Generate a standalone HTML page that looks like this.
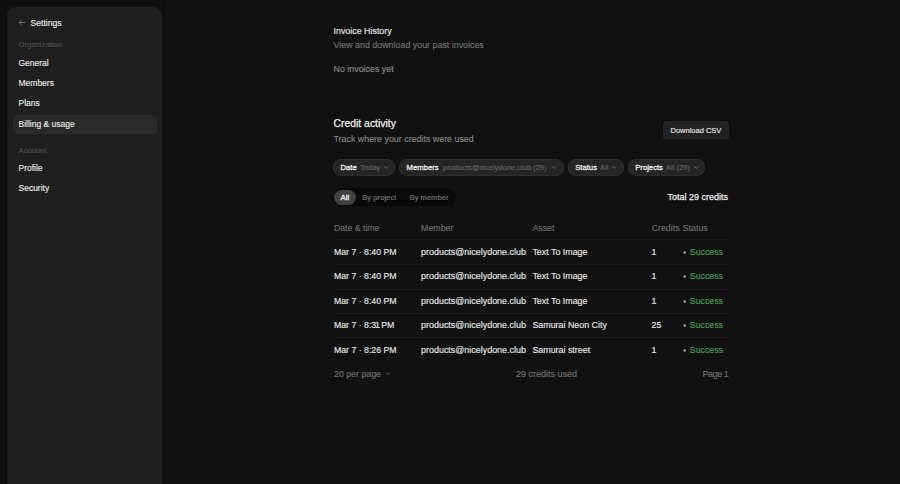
<!DOCTYPE html>
<html><head><meta charset="utf-8"><style>
html,body{margin:0;padding:0;}
body{width:900px;height:484px;overflow:hidden;background:#111111;position:relative;font-family:"Liberation Sans",sans-serif;}
.t{position:absolute;white-space:nowrap;line-height:1;-webkit-text-stroke:0.15px currentColor;}
.b{-webkit-text-stroke:0;}
.r{position:absolute;}
</style></head><body>
<div class="r" style="left:7px;top:7px;width:155px;height:520px;background:#1f1f1f;border-radius:9px;"></div>
<div class="r" style="left:162px;top:7px;width:4px;height:477px;background:#0d0d0d;border-radius:0px;"></div>
<div class="r" style="left:0px;top:0px;width:166px;height:7px;background:#0f0f0f;border-radius:0px;"></div>
<div class="r" style="left:0px;top:0px;width:7px;height:484px;background:#0e0e0e;border-radius:0px;"></div>
<div class="r" style="left:12.5px;top:115px;width:144px;height:19px;background:#2a2a2a;border-radius:4px;"></div>
<svg class="r" style="left:17.6px;top:19px" width="8" height="7" viewBox="0 0 8 7"><path d="M6.8 3.5H1.2M3.5 1.2L1.2 3.5L3.5 5.8" stroke="#8c8c8c" stroke-width="0.75" fill="none" stroke-linecap="round" stroke-linejoin="round"/></svg>
<div class="r" style="left:663px;top:121px;width:65.5px;height:18px;background:#222222;border-radius:4px;box-shadow: inset 0 0 0 0.8px #2b2b2b;"></div>
<div class="r" style="left:333.3px;top:159px;width:62px;height:17px;background:#252525;border-radius:9px;box-shadow: inset 0 0 0 0.8px #323232;"></div>
<svg class="r" style="left:384.09999999999997px;top:165.5px" width="5" height="3" viewBox="0 0 5 3"><path d="M0.5 0.6L2.3 2.3L4.1 0.6" stroke="#8a8a8a" stroke-width="0.7" fill="none" stroke-linecap="round" stroke-linejoin="round"/></svg>
<div class="r" style="left:399.4px;top:159px;width:164.6px;height:17px;background:#252525;border-radius:9px;box-shadow: inset 0 0 0 0.8px #323232;"></div>
<svg class="r" style="left:552.4px;top:165.5px" width="5" height="3" viewBox="0 0 5 3"><path d="M0.5 0.6L2.3 2.3L4.1 0.6" stroke="#8a8a8a" stroke-width="0.7" fill="none" stroke-linecap="round" stroke-linejoin="round"/></svg>
<div class="r" style="left:568px;top:159px;width:56px;height:17px;background:#252525;border-radius:9px;box-shadow: inset 0 0 0 0.8px #323232;"></div>
<svg class="r" style="left:612.4px;top:165.5px" width="5" height="3" viewBox="0 0 5 3"><path d="M0.5 0.6L2.3 2.3L4.1 0.6" stroke="#8a8a8a" stroke-width="0.7" fill="none" stroke-linecap="round" stroke-linejoin="round"/></svg>
<div class="r" style="left:628px;top:159px;width:77.4px;height:17px;background:#252525;border-radius:9px;box-shadow: inset 0 0 0 0.8px #323232;"></div>
<svg class="r" style="left:693.8px;top:165.5px" width="5" height="3" viewBox="0 0 5 3"><path d="M0.5 0.6L2.3 2.3L4.1 0.6" stroke="#8a8a8a" stroke-width="0.7" fill="none" stroke-linecap="round" stroke-linejoin="round"/></svg>
<div class="r" style="left:333.4px;top:188px;width:122.4px;height:18px;background:#090909;border-radius:9px;"></div>
<div class="r" style="left:334px;top:189.6px;width:22px;height:15px;background:#424242;border-radius:8px;"></div>
<div class="r" style="left:333.5px;top:239px;width:395px;height:1px;background:#1d1d1d;border-radius:0px;"></div>
<svg class="r" style="left:682px;top:250px" width="6" height="6" viewBox="0 0 6 6"><circle cx="2.7" cy="2.6" r="1.25" fill="#8fbf8f"/></svg>
<div class="r" style="left:333.5px;top:264px;width:395px;height:1px;background:#1d1d1d;border-radius:0px;"></div>
<svg class="r" style="left:682px;top:274px" width="6" height="6" viewBox="0 0 6 6"><circle cx="2.7" cy="2.6" r="1.25" fill="#8fbf8f"/></svg>
<div class="r" style="left:333.5px;top:289px;width:395px;height:1px;background:#1d1d1d;border-radius:0px;"></div>
<svg class="r" style="left:682px;top:299px" width="6" height="6" viewBox="0 0 6 6"><circle cx="2.7" cy="2.6" r="1.25" fill="#8fbf8f"/></svg>
<div class="r" style="left:333.5px;top:313px;width:395px;height:1px;background:#1d1d1d;border-radius:0px;"></div>
<svg class="r" style="left:682px;top:323px" width="6" height="6" viewBox="0 0 6 6"><circle cx="2.7" cy="2.6" r="1.25" fill="#8fbf8f"/></svg>
<div class="r" style="left:333.5px;top:337px;width:395px;height:1px;background:#1d1d1d;border-radius:0px;"></div>
<svg class="r" style="left:682px;top:348px" width="6" height="6" viewBox="0 0 6 6"><circle cx="2.7" cy="2.6" r="1.25" fill="#8fbf8f"/></svg>
<svg class="r" style="left:385.5px;top:372px" width="4.5" height="3" viewBox="0 0 4.5 3"><path d="M0.4 0.6L2.25 2.3L4.1 0.6" stroke="#6f6f6f" stroke-width="0.7" fill="none"/></svg>
<div class="t" style="left:30.5px;top:19px;font-size:8.6px;color:#e6e6e6;font-weight:400;">Settings</div>
<div class="t" style="left:18.5px;top:41px;font-size:7.7px;color:#4e4e4e;font-weight:400;">Organization</div>
<div class="t" style="left:18.5px;top:59px;font-size:8.5px;color:#e6e6e6;font-weight:400;">General</div>
<div class="t" style="left:18.5px;top:79px;font-size:8.5px;color:#e6e6e6;font-weight:400;">Members</div>
<div class="t" style="left:18.5px;top:99px;font-size:8.5px;color:#e6e6e6;font-weight:400;">Plans</div>
<div class="t" style="left:18.5px;top:120px;font-size:8.5px;color:#e6e6e6;font-weight:400;">Billing &amp; usage</div>
<div class="t" style="left:18.5px;top:147px;font-size:7.7px;color:#4e4e4e;font-weight:400;">Account</div>
<div class="t" style="left:18.5px;top:164px;font-size:8.5px;color:#e6e6e6;font-weight:400;">Profile</div>
<div class="t" style="left:18.5px;top:184px;font-size:8.5px;color:#e6e6e6;font-weight:400;">Security</div>
<div class="t" style="left:333.5px;top:27px;font-size:8.9px;color:#e6e6e6;font-weight:400;">Invoice History</div>
<div class="t" style="left:333.5px;top:41px;font-size:8.9px;color:#727272;font-weight:400;">View and download your past invoices</div>
<div class="t" style="left:333.5px;top:65px;font-size:8.9px;color:#8a8a8a;font-weight:400;">No invoices yet</div>
<div class="t" style="left:333.5px;top:119px;font-size:10.4px;color:#ededed;font-weight:400;-webkit-text-stroke:0.25px currentColor;">Credit activity</div>
<div class="t" style="left:333.5px;top:135px;font-size:8.9px;color:#858585;font-weight:400;">Track where your credits were used</div>
<div class="t" style="left:670.5px;top:127px;font-size:7.5px;color:#e6e6e6;font-weight:400;">Download CSV</div>
<div class="t" style="left:340.5px;top:164px;font-size:7.7px;color:#e8e8e8;font-weight:400;-webkit-text-stroke:0.3px currentColor;">Date</div>
<div class="t" style="left:360.3px;top:164px;font-size:7.5px;color:#636363;font-weight:400;">Today</div>
<div class="t" style="left:406.59999999999997px;top:164px;font-size:7.7px;color:#e8e8e8;font-weight:400;-webkit-text-stroke:0.3px currentColor;">Members</div>
<div class="t" style="left:443px;top:164px;font-size:7.5px;color:#636363;font-weight:400;">products@nicelydone.club (29)</div>
<div class="t" style="left:575.2px;top:164px;font-size:7.7px;color:#e8e8e8;font-weight:400;-webkit-text-stroke:0.3px currentColor;">Status</div>
<div class="t" style="left:600px;top:164px;font-size:7.5px;color:#636363;font-weight:400;">All</div>
<div class="t" style="left:635.2px;top:164px;font-size:7.7px;color:#e8e8e8;font-weight:400;-webkit-text-stroke:0.3px currentColor;">Projects</div>
<div class="t" style="left:666px;top:164px;font-size:7.5px;color:#636363;font-weight:400;">All (29)</div>
<div class="t" style="left:340.4px;top:194px;font-size:7.9px;color:#f0f0f0;font-weight:400;-webkit-text-stroke:0.3px currentColor;">All</div>
<div class="t" style="left:362.2px;top:194px;font-size:7.7px;color:#747474;font-weight:400;">By project</div>
<div class="t" style="left:409.6px;top:194px;font-size:7.6px;color:#747474;font-weight:400;">By member</div>
<div class="t" style="left:667.6px;top:193px;font-size:9px;color:#ececec;font-weight:400;-webkit-text-stroke:0.25px currentColor;">Total 29 credits</div>
<div class="t" style="left:334px;top:224px;font-size:8.7px;color:#6e6e6e;font-weight:400;">Date &amp; time</div>
<div class="t" style="left:421.1px;top:224px;font-size:8.8px;color:#6e6e6e;font-weight:400;">Member</div>
<div class="t" style="left:532.4px;top:224px;font-size:8.8px;color:#6e6e6e;font-weight:400;">Asset</div>
<div class="t" style="left:651.7px;top:224px;font-size:8.8px;color:#6e6e6e;font-weight:400;">Credits</div>
<div class="t" style="left:682.8px;top:224px;font-size:8.8px;color:#6e6e6e;font-weight:400;">Status</div>
<div class="t" style="left:334px;top:248px;font-size:8.73px;color:#e6e6e6;font-weight:400;">Mar 7 · 8:40 PM</div>
<div class="t" style="left:421.1px;top:248px;font-size:8.94px;color:#e6e6e6;font-weight:400;">products@nicelydone.club</div>
<div class="t" style="left:532.4px;top:248px;font-size:8.9px;color:#e6e6e6;font-weight:400;">Text To Image</div>
<div class="t" style="left:651.5px;top:248px;font-size:8.9px;color:#e6e6e6;font-weight:400;">1</div>
<div class="t" style="left:689.8px;top:248px;font-size:8.78px;color:#4b9f52;font-weight:400;">Success</div>
<div class="t" style="left:334px;top:272px;font-size:8.73px;color:#e6e6e6;font-weight:400;">Mar 7 · 8:40 PM</div>
<div class="t" style="left:421.1px;top:272px;font-size:8.94px;color:#e6e6e6;font-weight:400;">products@nicelydone.club</div>
<div class="t" style="left:532.4px;top:272px;font-size:8.9px;color:#e6e6e6;font-weight:400;">Text To Image</div>
<div class="t" style="left:651.5px;top:272px;font-size:8.9px;color:#e6e6e6;font-weight:400;">1</div>
<div class="t" style="left:689.8px;top:272px;font-size:8.78px;color:#4b9f52;font-weight:400;">Success</div>
<div class="t" style="left:334px;top:297px;font-size:8.73px;color:#e6e6e6;font-weight:400;">Mar 7 · 8:40 PM</div>
<div class="t" style="left:421.1px;top:297px;font-size:8.94px;color:#e6e6e6;font-weight:400;">products@nicelydone.club</div>
<div class="t" style="left:532.4px;top:297px;font-size:8.9px;color:#e6e6e6;font-weight:400;">Text To Image</div>
<div class="t" style="left:651.5px;top:297px;font-size:8.9px;color:#e6e6e6;font-weight:400;">1</div>
<div class="t" style="left:689.8px;top:297px;font-size:8.78px;color:#4b9f52;font-weight:400;">Success</div>
<div class="t" style="left:334px;top:321px;font-size:8.73px;color:#e6e6e6;font-weight:400;">Mar 7 · 8:<span style="letter-spacing:-1.3px">3</span>1<span style="letter-spacing:-0.9px"> </span>PM</div>
<div class="t" style="left:421.1px;top:321px;font-size:8.94px;color:#e6e6e6;font-weight:400;">products@nicelydone.club</div>
<div class="t" style="left:532.4px;top:321px;font-size:8.9px;color:#e6e6e6;font-weight:400;">Samurai Neon City</div>
<div class="t" style="left:651.5px;top:321px;font-size:8.9px;color:#e6e6e6;font-weight:400;">25</div>
<div class="t" style="left:689.8px;top:321px;font-size:8.78px;color:#4b9f52;font-weight:400;">Success</div>
<div class="t" style="left:334px;top:346px;font-size:8.73px;color:#e6e6e6;font-weight:400;">Mar 7 · 8:26 PM</div>
<div class="t" style="left:421.1px;top:346px;font-size:8.94px;color:#e6e6e6;font-weight:400;">products@nicelydone.club</div>
<div class="t" style="left:532.4px;top:346px;font-size:8.9px;color:#e6e6e6;font-weight:400;">Samurai street</div>
<div class="t" style="left:651.5px;top:346px;font-size:8.9px;color:#e6e6e6;font-weight:400;">1</div>
<div class="t" style="left:689.8px;top:346px;font-size:8.78px;color:#4b9f52;font-weight:400;">Success</div>
<div class="t" style="left:334px;top:370px;font-size:8.8px;color:#6f6f6f;font-weight:400;">20 per page</div>
<div class="t" style="left:516px;top:370px;font-size:9px;color:#6f6f6f;font-weight:400;">29 credits used</div>
<div class="t" style="left:702.6px;top:370px;font-size:8.9px;color:#6f6f6f;font-weight:400;letter-spacing:-0.4px;">Page 1</div>
</body></html>
